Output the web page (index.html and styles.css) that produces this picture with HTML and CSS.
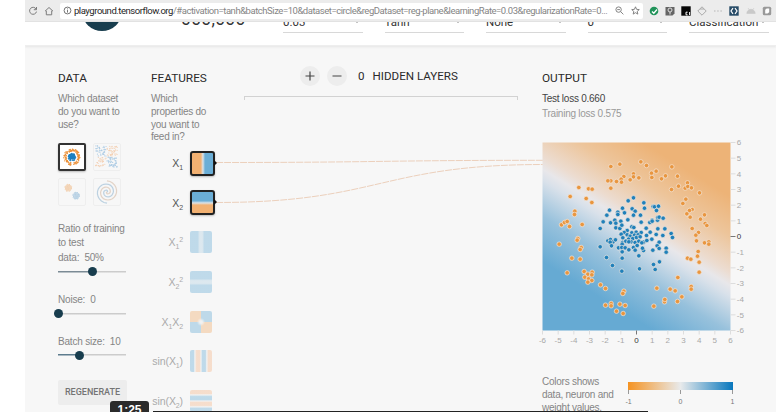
FILE: index.html
```html
<!DOCTYPE html>
<html lang="en">
<head>
<meta charset="utf-8">
<title>Neural network playground</title>
<link rel="stylesheet" href="styles.css">
</head>
<body>
<div class="window">
  <div class="toolbar">
    <svg class="nav-icon" viewBox="0 0 10 10"><path d="M8.2 3.2A3.5 3.5 0 1 0 8.5 5.6M8.5 1v2.7H5.8"/></svg>
    <svg class="nav-icon" viewBox="0 0 10 10"><path d="M1 5.2 5 1.5l4 3.7M2.3 4.8v4h5.4v-4"/></svg>
    <div class="address">
      <svg class="info-icon" viewBox="0 0 10 10"><circle cx="5" cy="5" r="3.8"/><path d="M5 4.5v2.8M5 2.7v1"/></svg>
      <span class="url"><b>playground.tensorflow.org</b>/#activation=tanh&amp;batchSize=10&amp;dataset=circle&amp;regDataset=reg-plane&amp;learningRate=0.03&amp;regularizationRate=0...</span>
      <svg class="bar-icon" viewBox="0 0 10 10"><circle cx="4" cy="4" r="3"/><path d="m6.3 6.3 3 3M2.5 4h3"/></svg>
      <svg class="bar-icon star" viewBox="0 0 10 10"><path d="m5 .9 1.2 2.8 3 .3-2.3 2 .7 3L5 7.4 2.4 9l.7-3L.8 4l3-.3z"/></svg>
    </div>
    <div class="extensions">
      <svg viewBox="0 0 10 10"><circle cx="5" cy="5" r="4.3" fill="#21935a"/><path d="m3 5.5 1.8 1.7L8 3.5" stroke="#fff" stroke-width="1.3" fill="none"/></svg>
      <svg viewBox="0 0 10 10"><path d="M.5 1h9v6.5L7.5 9.5h-7z" fill="#656565"/><circle cx="5" cy="4" r="2" fill="none" stroke="#ddd"/><path d="M5 6v2.5" stroke="#ddd"/></svg>
      <svg viewBox="0 0 10 10"><path d="M.3.3h9.4v9.4H.3z" fill="#080808"/><path d="M6.6 6.2H5v2.6h1.6M8.6 6v3" stroke="#fff" fill="none"/></svg>
      <svg viewBox="0 0 10 10"><path d="M5 .8 9.2 5 5 9.2.8 5zM3 3h4" stroke="#aaa" fill="none"/></svg>
      <svg viewBox="0 0 10 10"><path d="M1 5h1.5M4.2 5h1.5M7.4 5h1.5" stroke="#c8c8c8" stroke-width="1.3"/></svg>
      <svg viewBox="0 0 10 10"><path d="M.3.3h9.4v9.4H.3z" fill="#284c68"/><path d="M4 2.2 2 5l2 2.8M6 2.2 8 5 6 7.8" stroke="#fff" stroke-width="1.2" fill="none"/></svg>
      <svg viewBox="0 0 10 10"><path d="M.8 7.5a4.2 4.2 0 0 1 8.4 0zM2 2l1.5 2M8 2 6.5 4" fill="#c9c9c9" stroke="#c9c9c9" stroke-width=".6"/></svg>
      <svg viewBox="0 0 10 10"><rect x=".8" y=".8" width="8.4" height="8.4" rx="1.5" fill="#999"/><path d="M3.2 7.5V3.8l1.5-1.3h2.5v3.7L5.5 7.5z" fill="#fff"/></svg>
    </div>
  </div>

  <header class="controls">
    <div class="play"></div>
    <div class="epoch">000,000</div>
    <div class="select"><span>0.03</span><i></i></div>
    <div class="select"><span>Tanh</span><i></i></div>
    <div class="select"><span>None</span><i></i></div>
    <div class="select"><span>0</span><i></i></div>
    <div class="select"><span>Classification</span><i></i></div>
  </header>

  <main class="board">
    <section class="data">
      <h2>DATA</h2>
      <p class="lead">Which dataset<br>do you want to<br>use?</p>
      <div class="datasets">
        <svg class="dataset selected" viewBox="0 0 28 28"><g id="thumb-circle"></g></svg>
        <svg class="dataset" viewBox="0 0 28 28"><g id="thumb-xor"></g></svg>
        <svg class="dataset" viewBox="0 0 28 28"><g id="thumb-gauss"></g></svg>
        <svg class="dataset" viewBox="0 0 28 28"><g class="spiral"><path id="arm-a" stroke="#6d9fc4"/><path id="arm-b" stroke="#c9a486"/></g></svg>
      </div>
      <div class="setting ratio"><label>Ratio of training<br>to test<br>data:&nbsp; 50%</label><div class="slider half"><i></i></div></div>
      <div class="setting"><label>Noise:&nbsp; 0</label><div class="slider none"><i></i></div></div>
      <div class="setting"><label>Batch size:&nbsp; 10</label><div class="slider third"><i></i></div></div>
      <button class="regenerate">REGENERATE</button>
    </section>

    <section class="features">
      <h2>FEATURES</h2>
      <p class="lead">Which<br>properties do<br>you want to<br>feed in?</p>
      <div class="feature on"><span>X<sub>1</sub></span><i class="tile x1"></i></div>
      <div class="feature on"><span>X<sub>2</sub></span><i class="tile x2"></i></div>
      <div class="feature"><span>X<sub>1</sub><sup>2</sup></span><i class="tile x1sq"></i></div>
      <div class="feature"><span>X<sub>2</sub><sup>2</sup></span><i class="tile x2sq"></i></div>
      <div class="feature"><span>X<sub>1</sub>X<sub>2</sub></span><i class="tile x1x2"></i></div>
      <div class="feature"><span>sin(X<sub>1</sub>)</span><i class="tile sin1"></i></div>
      <div class="feature"><span>sin(X<sub>2</sub>)</span><i class="tile sin2"></i></div>
    </section>

    <section class="network">
      <div class="layers">
        <svg class="round" viewBox="0 0 20 20"><path d="M10 5.5v9M5.5 10h9"/></svg>
        <svg class="round" viewBox="0 0 20 20"><path d="M5.5 10h9"/></svg>
        <span class="count">0</span><span>HIDDEN LAYERS</span>
      </div>
      <div class="bracket"></div>
      <svg class="links" viewBox="0 0 328 60"><path d="M0 12.5C164 12.5 164 10.3 328 10.3"/><path d="M0 52.5C164 52.5 164 14.5 328 14.5"/></svg>
    </section>

    <section class="output">
      <h2>OUTPUT</h2>
      <div class="loss test">Test loss 0.660</div>
      <div class="loss">Training loss 0.575</div>
      <svg class="plot" viewBox="0 0 220 214">
        <defs><linearGradient id="field" gradientUnits="userSpaceOnUse" x1="160" y1="457" x2="404" y2="63">
          <stop offset="0" stop-color="#66aad3"/><stop offset=".25" stop-color="#97c1dc"/><stop offset=".45" stop-color="#d9e1ea"/><stop offset=".51" stop-color="#e8e7ea"/><stop offset=".58" stop-color="#ecdcd0"/><stop offset=".78" stop-color="#edc59b"/><stop offset="1" stop-color="#edb377"/>
        </linearGradient></defs>
        <g transform="translate(.5 2.5) scale(.33333)"><rect width="564" height="564" fill="url(#field)"/><g id="points"></g></g>
        <g id="axes"></g>
      </svg>
      <div class="legend">
        <p class="lead">Colors shows<br>data, neuron and<br>weight values.</p>
        <div class="scale"><div class="ramp"></div><div class="ticks"><span>-1</span><span>0</span><span>1</span></div></div>
      </div>
    </section>
  </main>
  <div class="progress"></div>
  <div class="timestamp">1:25</div>
</div>
<script src="plot.js"></script>
</body>
</html>
```
FILE: styles.css
```css
* { box-sizing: border-box; }
body { margin: 0; background: #fff; font-family: "Liberation Sans", Arial, sans-serif; overflow: hidden; }
.window { position: relative; width: 751px; height: 412px; margin-left: 25px; overflow: hidden; background: #f7f7f7; }
.toolbar { display: flex; align-items: center; height: 22px; background: #ececec; border-bottom: 1px solid #e2e2e2; }
.nav-icon { width: 10px; height: 10px; margin-left: 2px; margin-right: 4px; fill: none; stroke: #7c7c7c; stroke-width: 1; }
.nav-icon:first-child { margin-left: 3px; }
.address { display: flex; align-items: center; width: 583px; height: 16px; margin-left: 2px; padding-left: 3px; background: #fff; border-radius: 2px; }
.info-icon { flex: none; width: 9px; height: 9px; fill: none; stroke: #666; }
.url { flex: none; width: 538px; margin-left: 2px; font: 9.5px Roboto, sans-serif; letter-spacing: -.46px; color: #858585; white-space: nowrap; }
.url b { font-weight: 400; color: #262626; }
.bar-icon { flex: none; width: 9px; height: 9px; margin-left: 3px; fill: none; stroke: #777; }
.star { margin-left: 7px; }
.extensions { display: flex; gap: 6.1px; margin-left: 6px; }
.extensions svg { width: 10px; height: 10px; }

.controls { display: flex; align-items: flex-start; height: 24px; overflow: hidden; background: #fff; border-bottom: 1px solid #eee; box-shadow: 0 1px 2px #e5e5e5; font-family: Roboto, sans-serif; }
.play { flex: none; width: 40px; height: 40px; margin: -31px 0 0 57px; border-radius: 50%; background: #183d4e; }
.epoch { flex: none; width: 102px; margin: -13px 0 0 59px; font-size: 17.5px; line-height: 20px; letter-spacing: .3px; color: #333; }
.select { flex: none; display: flex; align-items: center; justify-content: space-between; width: 79.5px; height: 18px; margin: -7px 22px 0 0; padding: 0 4px 4px 0; border-bottom: 1px solid #d8d8d8; font-size: 11.5px; line-height: 14px; color: #333; }
.select i { border: 2.5px solid transparent; border-top-color: #888; border-bottom: 0; }

.board { display: grid; grid-template-columns: 93px 65px 326px 209px; padding: 25px 0 0 33px; }
h2 { margin: 0; font: 400 11.8px/14px Roboto, sans-serif; color: #2a2a2a; white-space: nowrap; }
.lead { margin: 8px 0 0; font-size: 10px; line-height: 12.8px; letter-spacing: -.25px; color: #858585; white-space: nowrap; }
.datasets { display: grid; grid-template-columns: 28px 28px; gap: 7px; margin-top: 12px; }
.dataset { width: 28px; height: 28px; border: 1px solid #e2e2e2; border-radius: 2px; opacity: .42; }
.dataset.selected { border: 2px solid #333; background: #fff; opacity: 1; box-shadow: 0 1px 2px #bbb; }
.spiral { fill: none; stroke-width: 1.3; }
.setting { margin-top: 14.8px; font-size: 10px; line-height: 15px; letter-spacing: -.2px; color: #858585; white-space: nowrap; }
.setting label { display: block; }
.setting.ratio { margin-top: 15.4px; line-height: 14.6px; }
.slider { width: 68px; height: 12px; display: flex; align-items: center; background: linear-gradient(#ccc, #ccc) center / 100% 1.5px no-repeat; }
.slider i { width: 9px; height: 9px; border-radius: 50%; background: #183d4e; }
.slider.half { background: linear-gradient(90deg, #7b8b95 50%, #ccc 50%) center / 100% 1.5px no-repeat; padding-left: 30px; }
.slider.third { background: linear-gradient(90deg, #5d7c8e 30%, #ccc 30%) center / 100% 1.5px no-repeat; padding-left: 17px; }
.slider.none i { margin-left: -4px; }
.regenerate { display: block; width: 69px; height: 25px; margin: 18.5px 0 0; padding: 0; border: 0; border-radius: 2px; background: #ededed; font: 500 9px Roboto, sans-serif; color: #747474; }

.features { width: 65px; }
.features .lead { margin-bottom: 9px; }
.feature { display: flex; align-items: center; justify-content: flex-end; height: 39.7px; margin-right: 4px; font-size: 10.5px; letter-spacing: -.1px; color: #aaa; white-space: nowrap; }
.feature.on { color: #555; margin-right: 1px; }
.feature:first-of-type { margin-top: -10px; }
.feature span { margin-right: 7px; }
.feature sub, .feature sup { font-size: 7px; line-height: 0; }
.tile { width: 22px; height: 22px; border-radius: 2px; opacity: .4; }
.on .tile { position: relative; width: 25px; height: 25px; border: 2px solid #222; border-radius: 3px; opacity: 1; box-shadow: 0 1px 2px #bbb; }
.on .tile::after { content: ""; position: absolute; left: 22px; top: 7px; border: 3.5px solid transparent; border-left-color: #111; border-right: 0; }
.x1 { background: linear-gradient(90deg, #f2b172 42%, #dce3e8 52%, #6baed6 62%); }
.x2 { background: linear-gradient(#6baed6 42%, #dce3e8 52%, #f2b172 62%); }
.x1sq { background: linear-gradient(90deg, #6baed6 35%, #b5d2e3 44%, #b5d2e3 56%, #6baed6 65%); }
.x2sq { background: linear-gradient(#6baed6 35%, #b5d2e3 44%, #b5d2e3 56%, #6baed6 65%); }
.x1x2 { background: radial-gradient(circle, #e8eaeb 8%, transparent 26%), conic-gradient(#6baed6 25%, #f2b172 0 50%, #6baed6 0 75%, #f2b172 0); }
.sin1 { background: linear-gradient(90deg, #6baed6 16%, #e8eaeb 22%, #f4b78c 30% 44%, #e8eaeb 50%, #6baed6 56% 70%, #e8eaeb 76%, #f4b78c 84%); }
.sin2 { background: linear-gradient(#f4b78c 16%, #e8eaeb 22%, #6baed6 30% 44%, #e8eaeb 50%, #f4b78c 56% 70%, #e8eaeb 76%, #6baed6 84%); }

.layers { display: flex; align-items: center; height: 20px; margin: -5px 0 0 84px; font: 11.6px Roboto, sans-serif; color: #2a2a2a; white-space: nowrap; }
.round { width: 20px; height: 20px; margin-right: 7px; border-radius: 50%; background: #ededed; fill: none; stroke: #444; stroke-width: 1.2; }
.count { margin: 0 8px 0 4px; }
.bracket { width: 274px; height: 4px; margin: 10px 0 0 28px; border: 1px solid #d2d2d2; border-bottom: 0; }
.links { display: block; width: 328px; height: 60px; margin: 50px 0 0; fill: none; stroke: #ecd0bc; stroke-width: 1; stroke-dasharray: 7 1; overflow: visible; }

.loss { font-size: 10px; line-height: 14.5px; letter-spacing: -.25px; color: #999; }
.loss.test { margin-top: 7px; color: #444; }
.plot { display: block; width: 220px; height: 214px; margin-top: 19px; overflow: visible; font-size: 8px; }
.legend { display: flex; margin-top: 14px; }
.legend .lead { width: 86px; margin-top: 8px; }
.scale { width: 105px; margin-top: 14px; }
.ramp { height: 8px; background: linear-gradient(90deg, #f59322, #e8eaeb 50%, #0877bd); }
.ticks { display: flex; justify-content: space-between; margin: 0 -4px; font-size: 7px; line-height: 9px; color: #777; }
.ticks span { width: 9px; text-align: center; }
.ticks span::before { content: ""; display: block; width: 1px; height: 4px; margin: 0 auto 3px; background: #999; }
.progress { position: absolute; left: 128px; top: 411px; width: 495px; height: 1px; background: #222; }
.timestamp { position: absolute; left: 85px; top: 401px; width: 39px; height: 20px; border-radius: 3px 3px 0 0; background: #2b2b2b; color: #fff; font: 700 12px/18px "Liberation Sans", sans-serif; text-align: center; }
```
FILE: plot.js
```js
const NS = "http://www.w3.org/2000/svg";
function add(parent, tag, attrs, text) {
  const el = document.createElementNS(NS, tag);
  for (const k in attrs) el.setAttribute(k, attrs[k]);
  if (text !== undefined) el.textContent = text;
  parent.appendChild(el);
}
const orange = [
  [205,72],[232,65],[295,58],[312,69],[341,86],[327,92],[328,105],[273,94],[273,103],[289,106],[263,112],[244,102],[236,110],[237,119],[222,117],[205,115],[196,115],[205,137],[109,135],[138,139],[149,140],[83,162],[131,168],[148,180],[97,206],[96,216],[57,247],[66,240],[74,237],[81,252],[119,246],[106,288],[104,293],[50,305],
  [369,100],[357,109],[388,73],[405,101],[435,121],[408,131],[428,137],[436,132],[447,136],[471,151],[387,141],[430,170],[421,183],[449,201],[441,204],[433,214],[443,224],[486,217],[474,230],[488,243],[493,249],[449,258],[468,270],[460,278],[462,295],[486,301],[499,298],
  [116,315],[113,321],[88,347],[113,350],[74,391],[125,387],[149,389],[136,395],[148,397],[127,404],[138,409],[148,414],[136,419],[174,427],[189,438],[244,446],[241,453],[189,488],[206,483],[206,490],[232,485],[248,489],[222,506],[242,513],[343,437],[334,491],
  [499,305],[467,327],[465,341],[435,347],[445,350],[470,359],[470,389],[406,405],[446,432],[446,440],[383,440],[398,445],[418,463],[405,477],[366,478],[367,471]
];
const blue = [
  [257,175],[273,166],[304,181],[306,197],[201,203],[193,218],[240,197],[226,209],[226,216],[246,211],[269,199],[278,206],[273,218],[294,218],[332,192],[336,193],[348,191],[342,204],[182,238],[173,258],[204,241],[217,233],[220,242],[235,236],[256,232],[220,256],[232,258],[238,248],[296,239],[322,240],[329,233],[329,236],[345,233],[346,225],[268,253],[274,255],[311,257],[254,264],[245,270],[236,275],[268,271],[281,269],[296,270],[323,269],[312,279],[341,276],[346,259],[254,277],
  [263,281],[276,278],[287,277],[241,286],[258,290],[271,288],[282,285],[293,283],[196,295],[204,291],[212,298],[219,292],[203,299],[240,300],[250,296],[266,298],[278,300],[289,296],[303,299],[313,294],[328,290],[350,299],[350,224],[362,227],[367,259],[386,273],[390,285],[361,279],
  [173,313],[207,310],[192,345],[210,369],[238,386],[239,347],[239,328],[239,305],[228,316],[238,315],[248,316],[259,322],[273,315],[278,323],[284,309],[259,298],[298,301],[303,324],[300,317],[289,340],[331,323],[344,310],[350,318],[291,379],[333,366],[338,381],[351,358],[371,317],[371,329]
];
const points = document.getElementById("points");
for (const [list, fill] of [[orange, "#e9963f"], [blue, "#1f80ba"]])
  for (const [cx, cy] of list)
    add(points, "circle", { cx, cy, r: 6.8, fill, stroke: "#f3e8e0", "stroke-width": 2 });

const axes = document.getElementById("axes");
const step = 188 / 12;
for (let v = -6; v <= 6; v++) {
  const x = 0.5 + (v + 6) * step, y = 2.5 + (6 - v) * step;
  const fill = v === 0 ? "#333" : "#a8a8a8";
  const stroke = v === 0 ? "#777" : "#ddd";
  add(axes, "path", { d: `M${x} 190.5v4M188.5 ${y}h5`, stroke, fill: "none" });
  add(axes, "text", { x, y: 203, fill, "text-anchor": "middle" }, v);
  add(axes, "text", { x: 194.8, y: y + 2.8, fill }, v);
}

// Dataset thumbnails
function dot(id, x, y, fill, r) {
  add(document.getElementById(id), "circle", { cx: x.toFixed(1), cy: y.toFixed(1), r, fill });
}
for (const [x, y] of orange) dot("thumb-circle", 2.5 + x / 24.5, 2.5 + y / 24.5, "#eb913a", 0.85);
for (const [x, y] of blue) dot("thumb-circle", 14 + (x - 282) / 26, 14 + (y - 275) / 26, "#1b7fc0", 0.8);
let seed = 7;
function random() {
  seed = (seed * 16807) % 2147483647;
  return seed / 2147483647;
}
for (let i = 0; i < 170; i++) {
  const x = random(), y = random();
  const gx = x < 0.5 ? -0.5 : 0.5, gy = y < 0.5 ? -0.5 : 0.5;
  dot("thumb-xor", 2.5 + x * 22 + gx, 2.5 + y * 22 + gy, gx === gy ? "#4a92cc" : "#f09a55", 0.65);
}
for (let i = 0; i < 50; i++) {
  const a = i * 2.4, r = Math.sqrt(i) * 0.55;
  dot("thumb-gauss", 10 + r * Math.cos(a), 9.5 + r * Math.sin(a), "#eb913a", 0.6);
  dot("thumb-gauss", 18.5 + r * Math.cos(a), 18 + r * Math.sin(a), "#4a90c5", 0.6);
}
for (const [id, phase] of [["arm-a", 0], ["arm-b", Math.PI]]) {
  let d = "";
  for (let t = 0; t <= 40; t++) {
    const a = t / 40 * 3.5 * Math.PI, r = t / 40 * 12;
    d += (t ? "L" : "M") + (14 + r * Math.cos(a + phase)).toFixed(1) + " " + (14 - r * Math.sin(a + phase)).toFixed(1);
  }
  document.getElementById(id).setAttribute("d", d);
}
```
